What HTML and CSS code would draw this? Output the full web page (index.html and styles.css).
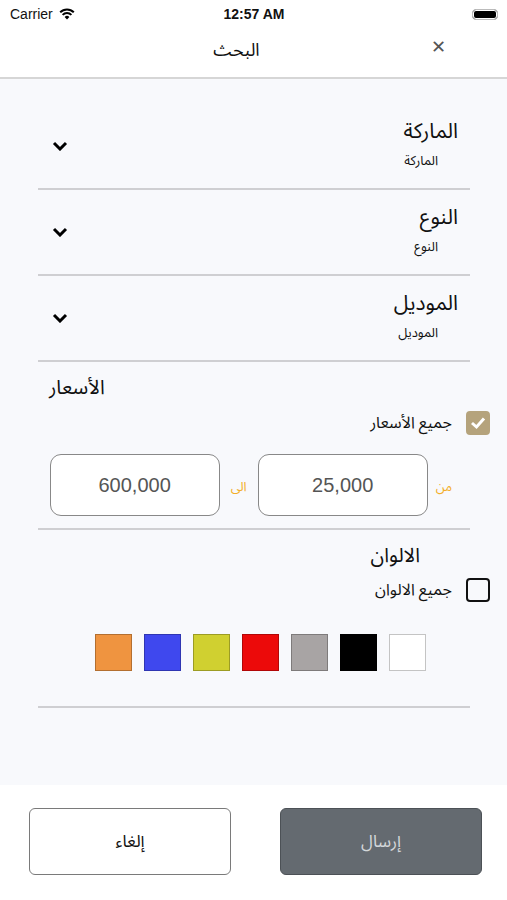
FILE: index.html
```html
<!DOCTYPE html>
<html lang="ar" dir="rtl">
<head>
  <meta charset="UTF-8" />
  <title>البحث</title>
  <meta name="viewport" content="width=device-width, initial-scale=1.0" />
  <link rel="stylesheet" href="styles.css">
</head>
<body>

  <!-- status bar -->
  <div class="status-bar" dir="ltr">
    <div class="carrier">
      Carrier
      <svg width="16" height="12" viewBox="0 0 16 12"><path d="M8 11.5 L5.6 8.9 A3.5 3.5 0 0 1 10.4 8.9 Z" fill="#000"/><path d="M3.6 6.9 A6.3 6.3 0 0 1 12.4 6.9" stroke="#000" stroke-width="2" fill="none"/><path d="M1.2 4.3 A9.6 9.6 0 0 1 14.8 4.3" stroke="#000" stroke-width="2" fill="none"/></svg>
    </div>
    <div class="clock">12:57 AM</div>
    <div class="battery"><span></span></div>
  </div>

  <header class="nav">
    <span class="nav-close">✕</span>
    <h1>البحث</h1>
  </header>

  <main class="content">

    <div class="field">
      <div class="field-text">
        <div class="field-title">الماركة</div>
        <div class="field-sub">الماركة</div>
      </div>
      <svg class="chevron" width="16" height="10" viewBox="0 0 16 10"><path d="M2 2 L8 8 L14 2" stroke="#000" stroke-width="3" fill="none"/></svg>
    </div>

    <div class="field">
      <div class="field-text">
        <div class="field-title">النوع</div>
        <div class="field-sub">النوع</div>
      </div>
      <svg class="chevron" width="16" height="10" viewBox="0 0 16 10"><path d="M2 2 L8 8 L14 2" stroke="#000" stroke-width="3" fill="none"/></svg>
    </div>

    <div class="field">
      <div class="field-text">
        <div class="field-title">الموديل</div>
        <div class="field-sub">الموديل</div>
      </div>
      <svg class="chevron" width="16" height="10" viewBox="0 0 16 10"><path d="M2 2 L8 8 L14 2" stroke="#000" stroke-width="3" fill="none"/></svg>
    </div>

    <section class="prices">
      <h2 class="prices-title">الأسعار</h2>
      <div class="check-row">
        <span class="checkbox checked">
          <svg width="16" height="14" viewBox="0 0 16 14"><path d="M2 7 L6.5 11 L14 2.5" stroke="#fff" stroke-width="3" fill="none"/></svg>
        </span>
        <span class="check-label">جميع الأسعار</span>
      </div>
      <div class="range">
        <span class="range-label">من</span>
        <div class="range-box">25,000</div>
        <span class="range-label to">الى</span>
        <div class="range-box">600,000</div>
      </div>
    </section>

    <section class="colors">
      <h2 class="colors-title">الالوان</h2>
      <div class="check-row">
        <span class="checkbox"></span>
        <span class="check-label">جميع الالوان</span>
      </div>
      <div class="swatches">
        <span class="swatch white"></span>
        <span class="swatch black"></span>
        <span class="swatch gray"></span>
        <span class="swatch red"></span>
        <span class="swatch yellow"></span>
        <span class="swatch blue"></span>
        <span class="swatch orange"></span>
      </div>
    </section>

  </main>

  <footer class="actions">
    <button class="btn submit">إرسال</button>
    <button class="btn cancel">إلغاء</button>
  </footer>

</body>
</html>
```

FILE: styles.css
```css
body {
  margin: 0;
  width: 507px;
  height: 900px;
  display: flex;
  flex-direction: column;
  font-family: "Noto Sans Arabic", "DejaVu Sans", sans-serif;
  background: #fff;
  color: #111;
}

.status-bar {
  height: 28px;
  display: flex;
  align-items: center;
  justify-content: space-between;
  padding: 0 9px 0 10px;
  font-family: "Liberation Sans", Arial, sans-serif;
  font-size: 14px;
  flex-shrink: 0;
}

.carrier {
  display: flex;
  align-items: center;
  gap: 6px;
  width: 110px;
}

.clock {
  font-weight: bold;
}

.battery {
  width: 110px;
  display: flex;
  justify-content: flex-end;
}

.battery span {
  width: 24px;
  height: 9px;
  background: #000;
  border: 1.5px solid #bbb;
  border-radius: 4px;
  box-shadow: inset 0 0 0 1px #fff;
}

.nav {
  height: 43px;
  padding-bottom: 6px;
  display: flex;
  align-items: center;
  justify-content: center;
  position: relative;
  border-bottom: 2px solid #d6d6d6;
  flex-shrink: 0;
}

.nav h1 {
  margin: 0 34px 0 0;
  font-size: 18px;
  font-weight: normal;
}

.nav-close {
  position: absolute;
  left: 431px;
  top: 8px;
  font-family: "DejaVu Sans", sans-serif;
  font-size: 18px;
  font-weight: bold;
  color: #555;
}

.content {
  flex: 1;
  background: #f8f9fc;
  padding: 25px 37px 0 38px;
}

.field {
  display: flex;
  align-items: center;
  justify-content: space-between;
  padding: 14px 12px 17px 14px;
  border-bottom: 2px solid #cfcfd2;
}

.field-title {
  font-size: 21px;
  line-height: 26px;
}

.field-sub {
  font-size: 13px;
  line-height: 20px;
  margin-top: 7px;
  padding-right: 20px;
}

.chevron {
  display: block;
  margin-top: 2px;
}

.prices {
  padding: 13px 0 12px;
  border-bottom: 2px solid #cfcfd2;
}

.prices-title {
  margin: 0;
  text-align: left;
  padding-left: 11px;
  font-size: 20px;
  line-height: 26px;
  font-weight: normal;
}

.check-row {
  display: flex;
  align-items: center;
  gap: 14px;
  margin: 10px -20px 0 0;
}

.colors .check-row {
  margin-top: 9px;
}

.checkbox {
  width: 20px;
  height: 20px;
  border: 2px solid #111;
  border-radius: 4px;
  display: flex;
  align-items: center;
  justify-content: center;
}

.checkbox.checked {
  background: #b5a37c;
  border-color: #b5a37c;
}

.check-label {
  font-size: 16px;
  line-height: 24px;
}

.range {
  display: flex;
  align-items: center;
  margin-top: 19px;
  padding-right: 18px;
}

.range-label {
  color: #f3ae28;
  font-size: 13px;
  margin-left: 8px;
  margin-top: 4px;
}

.range-label.to {
  margin: 4px 11px 0 11px;
}

.range-box {
  width: 168px;
  height: 60px;
  border: 1px solid #888;
  border-radius: 11px;
  background: #fff;
  display: flex;
  align-items: center;
  justify-content: center;
  font-family: "Liberation Sans", Arial, sans-serif;
  font-size: 20px;
  color: #555;
}

.colors {
  padding: 13px 0 35px;
  border-bottom: 2px solid #cfcfd2;
}

.colors-title {
  margin: 0;
  padding-right: 50px;
  font-size: 20px;
  line-height: 26px;
  font-weight: normal;
}

.swatches {
  display: flex;
  gap: 12px;
  margin-top: 32px;
  padding-right: 44px;
}

.swatch {
  width: 35px;
  height: 35px;
  border: 1px solid rgba(0, 0, 0, 0.25);
}

.white { background: #fff; border-color: #c4c4c4; }
.black { background: #000; }
.gray { background: #a8a4a4; }
.red { background: #ec0a0a; }
.yellow { background: #d0d030; }
.blue { background: #3f48ee; }
.orange { background: #ef9440; }

.actions {
  box-sizing: border-box;
  height: 115px;
  display: flex;
  align-items: flex-start;
  gap: 49px;
  padding: 23px 25px 0 29px;
  flex-shrink: 0;
}

.btn {
  width: 202px;
  height: 67px;
  border-radius: 6px;
  font-family: "Noto Sans Arabic", "DejaVu Sans", sans-serif;
  font-size: 17px;
}

.submit {
  background: #646a70;
  border: 1px solid #4c5156;
  color: #d4d7da;
}

.cancel {
  background: #fff;
  border: 1.5px solid #7a7a7a;
  color: #111;
}
```
